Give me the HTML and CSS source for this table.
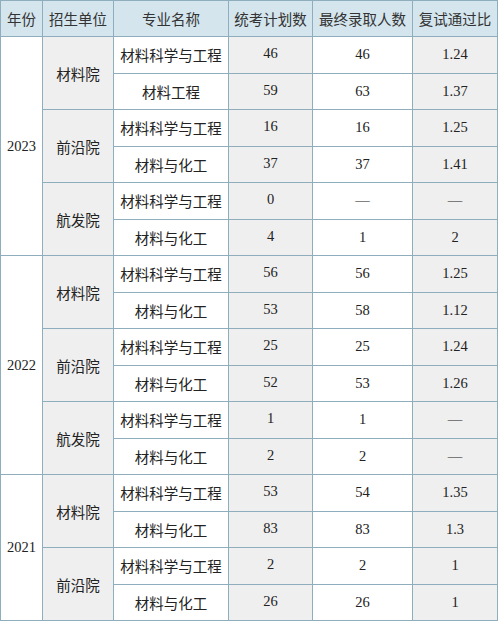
FILE: index.html
```html
<!DOCTYPE html>
<html lang="zh-CN">
<head>
  <meta charset="UTF-8">
  <title>招生数据</title>
  <link rel="stylesheet" href="styles.css">
</head>
<body>
  <table class="stats">
    <colgroup>
      <col class="c-year">
      <col class="c-unit">
      <col class="c-major">
      <col class="c-plan">
      <col class="c-admit">
      <col class="c-ratio">
    </colgroup>
    <thead>
      <tr>
        <th>年份</th>
        <th>招生单位</th>
        <th>专业名称</th>
        <th>统考计划数</th>
        <th>最终录取人数</th>
        <th>复试通过比</th>
      </tr>
    </thead>
    <tbody>
      <tr>
        <td rowspan="6" class="year">2023</td>
        <td rowspan="2" class="unit">材料院</td>
        <td>材料科学与工程</td><td class="plan">46</td><td>46</td><td class="ratio">1.24</td>
      </tr>
      <tr><td>材料工程</td><td class="plan">59</td><td>63</td><td class="ratio">1.37</td></tr>
      <tr>
        <td rowspan="2" class="unit">前沿院</td>
        <td>材料科学与工程</td><td class="plan">16</td><td>16</td><td class="ratio">1.25</td>
      </tr>
      <tr><td>材料与化工</td><td class="plan">37</td><td>37</td><td class="ratio">1.41</td></tr>
      <tr>
        <td rowspan="2" class="unit">航发院</td>
        <td>材料科学与工程</td><td class="plan">0</td><td>—</td><td class="ratio">—</td>
      </tr>
      <tr><td>材料与化工</td><td class="plan">4</td><td>1</td><td class="ratio">2</td></tr>

      <tr>
        <td rowspan="6" class="year">2022</td>
        <td rowspan="2" class="unit">材料院</td>
        <td>材料科学与工程</td><td class="plan">56</td><td>56</td><td class="ratio">1.25</td>
      </tr>
      <tr><td>材料与化工</td><td class="plan">53</td><td>58</td><td class="ratio">1.12</td></tr>
      <tr>
        <td rowspan="2" class="unit">前沿院</td>
        <td>材料科学与工程</td><td class="plan">25</td><td>25</td><td class="ratio">1.24</td>
      </tr>
      <tr><td>材料与化工</td><td class="plan">52</td><td>53</td><td class="ratio">1.26</td></tr>
      <tr>
        <td rowspan="2" class="unit">航发院</td>
        <td>材料科学与工程</td><td class="plan">1</td><td>1</td><td class="ratio">—</td>
      </tr>
      <tr><td>材料与化工</td><td class="plan">2</td><td>2</td><td class="ratio">—</td></tr>

      <tr>
        <td rowspan="4" class="year">2021</td>
        <td rowspan="2" class="unit">材料院</td>
        <td>材料科学与工程</td><td class="plan">53</td><td>54</td><td class="ratio">1.35</td>
      </tr>
      <tr><td>材料与化工</td><td class="plan">83</td><td>83</td><td class="ratio">1.3</td></tr>
      <tr>
        <td rowspan="2" class="unit">前沿院</td>
        <td>材料科学与工程</td><td class="plan">2</td><td>2</td><td class="ratio">1</td>
      </tr>
      <tr><td>材料与化工</td><td class="plan">26</td><td>26</td><td class="ratio">1</td></tr>
    </tbody>
  </table>
</body>
</html>
```

FILE: styles.css
```css
body {
  margin: 0;
  background: #fff;
}
.stats {
  border-collapse: collapse;
  table-layout: fixed;
  width: 497px;
  font-family: "Liberation Serif", "Noto Sans CJK SC", serif;
  font-size: 14.5px;
  color: #222;
}
.c-year { width: 42px; }
.c-unit { width: 71px; }
.c-major { width: 115px; }
.c-plan { width: 84px; }
.c-admit { width: 100px; }
.c-ratio { width: 85px; }
.stats th,
.stats td {
  border: 1px solid #8eaebd;
  text-align: center;
  vertical-align: middle;
  padding: 0;
  white-space: nowrap;
  background: #fff;
}
.stats th {
  background: #d4e5ed;
  font-weight: normal;
  height: 35px;
  color: #333;
}
.stats tbody tr {
  height: 36.5px;
}
.stats td.unit,
.stats td.plan,
.stats td.ratio {
  background: #efefef;
}
.stats td.plan {
  padding-bottom: 2px;
}
```
